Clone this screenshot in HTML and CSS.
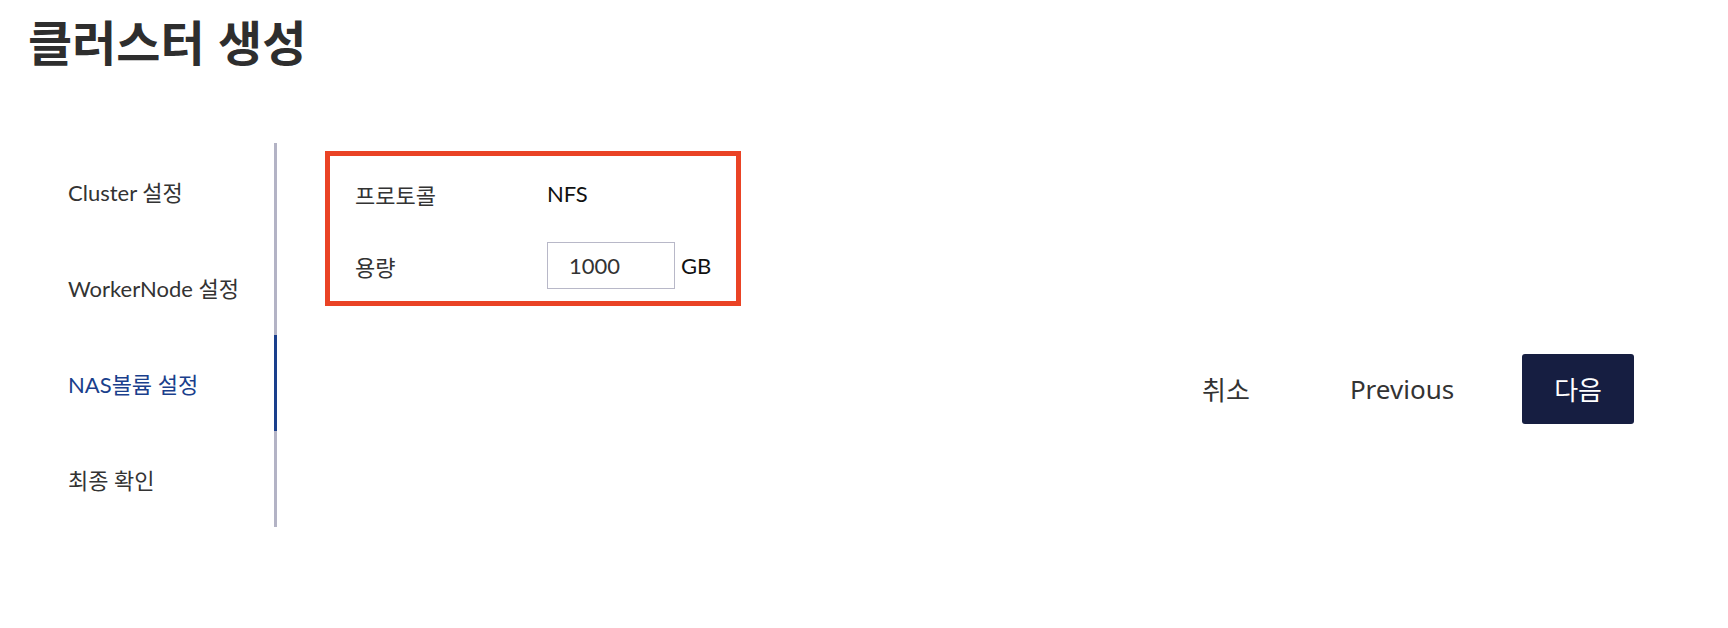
FILE: index.html
```html
<!DOCTYPE html>
<html lang="ko">
<head>
<meta charset="utf-8">
<title>클러스터 생성</title>
<link rel="stylesheet" href="styles.css">
</head>
<body>
<div class="page">
  <h1 class="title">클러스터 생성</h1>
  <div class="main">
    <nav class="sidebar">
      <div class="nav-item">Cluster 설정</div>
      <div class="nav-item">WorkerNode 설정</div>
      <div class="nav-item active">NAS볼륨 설정</div>
      <div class="nav-item">최종 확인</div>
    </nav>
    <section class="content">
      <div class="form-box">
        <div class="row">
          <div class="label">프로토콜</div>
          <div class="value">NFS</div>
        </div>
        <div class="row">
          <div class="label">용량</div>
          <div class="value">
            <input class="size-input" type="text" value="1000">
            <span class="unit">GB</span>
          </div>
        </div>
      </div>
      <div class="actions">
        <button class="btn">취소</button>
        <button class="btn">Previous</button>
        <button class="btn primary">다음</button>
      </div>
    </section>
  </div>
</div>
</body>
</html>
```

FILE: styles.css
```css
html, body {
  margin: 0;
  padding: 0;
  background: #ffffff;
}

body {
  font-family: Lato, "Noto Sans CJK KR", sans-serif;
  color: #333333;
}

.page {
  padding-left: 28px;
  padding-right: 94px;
}

.title {
  margin: 0;
  padding-top: 7px;
  font-family: "Noto Sans CJK KR", sans-serif;
  font-weight: 700;
  font-size: 48px;
  line-height: 66px;
  color: #2e2e2e;
}

.main {
  display: flex;
  margin-top: 70px;
}

.sidebar {
  width: 249px;
  display: flex;
  flex-direction: column;
}

.nav-item {
  height: 96px;
  display: flex;
  align-items: center;
  padding-left: 40px;
  border-right: 3px solid #b3b3c5;
  font-size: 22px;
  color: #333333;
}

.nav-item.active {
  border-right-color: #1a3f8c;
  color: #1a3f8c;
}

.content {
  flex: 1;
  padding-left: 48px;
  padding-top: 8px;
  display: flex;
  flex-direction: column;
}

.form-box {
  box-sizing: border-box;
  width: 416px;
  border: 5px solid #ea4325;
  padding: 14px 0 12px 25px;
  display: flex;
  flex-direction: column;
  gap: 25px;
}

.row {
  display: flex;
  align-items: center;
  height: 47px;
}

.label {
  width: 192px;
  font-size: 22px;
  color: #333333;
}

.value {
  display: flex;
  align-items: center;
  font-size: 22px;
  color: #111111;
}

.size-input {
  box-sizing: border-box;
  width: 128px;
  height: 47px;
  border: 1px solid #b8b8c8;
  padding: 0 0 0 21px;
  font-family: Lato, sans-serif;
  font-size: 22px;
  color: #333333;
  outline: none;
  background: #ffffff;
}

.unit {
  margin-left: 6px;
}

.actions {
  margin-top: 48px;
  display: flex;
  justify-content: flex-end;
  gap: 36px;
}

.btn {
  height: 70px;
  padding: 0 32px;
  border: none;
  border-radius: 3px;
  background: transparent;
  font-family: "Noto Sans", "Noto Sans CJK KR", sans-serif;
  font-size: 26px;
  color: #333333;
}

.btn.primary {
  background: #161e41;
  color: #ffffff;
}
```
